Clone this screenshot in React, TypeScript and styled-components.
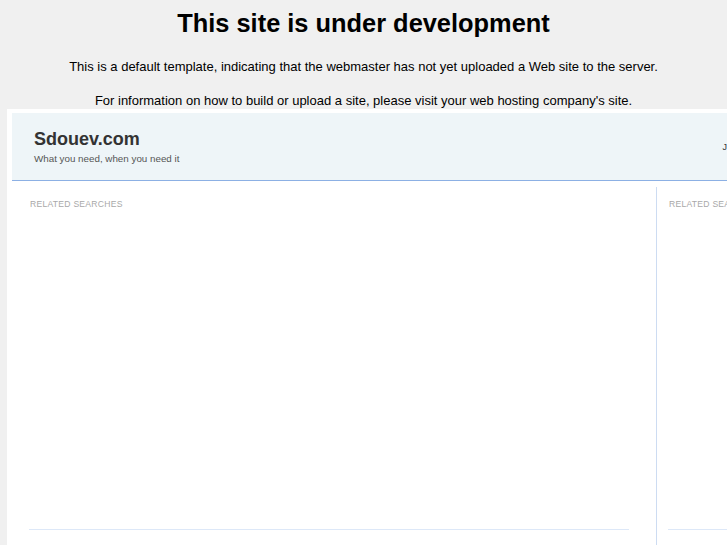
import React from 'react';
import styled, { createGlobalStyle } from 'styled-components';

const GlobalStyle = createGlobalStyle`
  html, body {
    margin: 0;
    padding: 0;
    background: #f0f0f0;
    overflow: hidden;
  }
  body {
    font-family: "Liberation Sans", Arial, sans-serif;
    width: 727px;
    height: 545px;
  }
`;

const Notice = styled.div`
  text-align: center;
  color: #000;
  padding-top: 8px;
`;

const Title = styled.h1`
  font-size: 25.4px;
  font-weight: 700;
  margin: 0 0 21px;
  line-height: 30px;
`;

const Line = styled.p<{ $last?: boolean }>`
  font-size: 13px;
  margin: 0 0 ${({ $last }) => ($last ? '1px' : '19px')};
  line-height: 15px;
`;

const Frame = styled.div`
  margin-left: 7px;
  width: 760px;
  height: 440px;
  background: #fff;
  padding: 4px 0 0 5px;
`;

const Header = styled.header`
  height: 67px;
  background: #eef5f8;
  border-bottom: 1px solid #8cb0e4;
  display: flex;
  justify-content: space-between;
  align-items: center;
  padding: 0 0 0 22px;
`;

const Brand = styled.div`
  display: flex;
  flex-direction: column;
  padding-bottom: 1px;
`;

const SiteName = styled.div`
  font-family: Arial, "Liberation Sans", sans-serif;
  font-size: 18px;
  font-weight: 700;
  color: #333;
`;

const Tagline = styled.div`
  font-size: 9.8px;
  color: #555;
  margin-top: 3px;
`;

const Cut = styled.div`
  font-size: 9px;
  color: #333;
  margin-right: 45px;
`;

const Columns = styled.div`
  display: flex;
  padding-top: 6px;
`;

const Column = styled.section<{ $wide?: boolean; $divided?: boolean }>`
  flex-shrink: 0;
  width: ${({ $wide }) => ($wide ? '644px' : '110px')};
  height: 362px;
  box-sizing: border-box;
  padding: 10px ${({ $wide }) => ($wide ? '27px' : '0')} 0 ${({ $wide }) => ($wide ? '17px' : '11px')};
  border-left: ${({ $divided }) => ($divided ? '1px solid #cddcf2' : 'none')};
  display: flex;
  flex-direction: column;
`;

const Label = styled.div`
  font-size: 8.6px;
  letter-spacing: 0.25px;
  color: #a8a8a8;
  text-transform: uppercase;
  white-space: nowrap;
  padding-top: 2px;
  padding-left: 1px;
`;

const Rule = styled.div`
  margin-top: auto;
  margin-bottom: 19px;
  border-top: 1px solid #dde8f8;
`;

export default function App() {
  return (
    <>
      <GlobalStyle />
      <Notice>
        <Title>This site is under development</Title>
        <Line>
          This is a default template, indicating that the webmaster has not yet uploaded a Web site to the server.
        </Line>
        <Line $last>
          For information on how to build or upload a site, please visit your web hosting company's site.
        </Line>
      </Notice>
      <Frame>
        <Header>
          <Brand>
            <SiteName>Sdouev.com</SiteName>
            <Tagline>What you need, when you need it</Tagline>
          </Brand>
          <Cut>J</Cut>
        </Header>
        <Columns>
          <Column $wide>
            <Label>Related searches</Label>
            <Rule />
          </Column>
          <Column $divided>
            <Label>Related searches</Label>
            <Rule />
          </Column>
        </Columns>
      </Frame>
    </>
  );
}
